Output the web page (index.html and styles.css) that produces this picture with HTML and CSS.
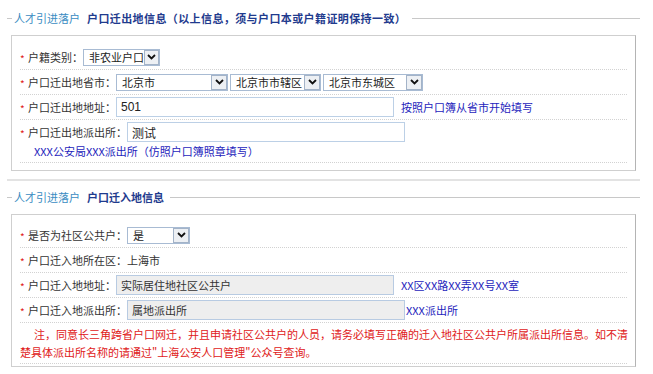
FILE: index.html
```html
<!DOCTYPE html>
<html lang="zh-CN">
<head>
  <meta charset="UTF-8" />
  <title>户口迁移信息</title>
  <link rel="stylesheet" href="styles.css">
</head>
<body>
  <div class="page">
    <div class="legend">
      <span class="cat">人才引进落户</span>
      <span class="title wide">户口迁出地信息（以上信息，须与户口本或户籍证明保持一致）</span>
    </div>
    <div class="box">
      <div class="row">
        <i class="req">*</i><span class="lbl">户籍类别：</span>
        <span class="sel w-type"><span class="val">非农业户口</span><span class="arr"><svg width="9" height="6" viewBox="0 0 9 6"><path d="M1 1 L4.5 4.5 L8 1" /></svg></span></span>
      </div>
      <div class="row">
        <i class="req">*</i><span class="lbl">户口迁出地省市：</span>
        <span class="sel w-prov"><span class="val">北京市</span><span class="arr"><svg width="9" height="6" viewBox="0 0 9 6"><path d="M1 1 L4.5 4.5 L8 1" /></svg></span></span>
        <span class="sel w-city"><span class="val">北京市市辖区</span><span class="arr"><svg width="9" height="6" viewBox="0 0 9 6"><path d="M1 1 L4.5 4.5 L8 1" /></svg></span></span>
        <span class="sel w-dist"><span class="val">北京市东城区</span><span class="arr"><svg width="9" height="6" viewBox="0 0 9 6"><path d="M1 1 L4.5 4.5 L8 1" /></svg></span></span>
      </div>
      <div class="row">
        <i class="req">*</i><span class="lbl">户口迁出地地址：</span>
        <input class="txt" type="text" value="501">
        <span class="hint gap">按照户口簿从省市开始填写</span>
      </div>
      <div class="row multi">
        <div class="line">
          <i class="req">*</i><span class="lbl">户口迁出地派出所：</span>
          <input class="txt" type="text" value="测试">
        </div>
        <div class="hint sub">XXX公安局XXX派出所（仿照户口簿照章填写）</div>
      </div>
    </div>

    <div class="divider"></div>

    <div class="legend second">
      <span class="cat">人才引进落户</span>
      <span class="title">户口迁入地信息</span>
    </div>
    <div class="box last">
      <div class="row">
        <i class="req">*</i><span class="lbl">是否为社区公共户：</span>
        <span class="sel w-yes"><span class="val">是</span><span class="arr"><svg width="9" height="6" viewBox="0 0 9 6"><path d="M1 1 L4.5 4.5 L8 1" /></svg></span></span>
      </div>
      <div class="row">
        <i class="req">*</i><span class="lbl">户口迁入地所在区：上海市</span>
      </div>
      <div class="row">
        <i class="req">*</i><span class="lbl">户口迁入地地址：</span>
        <input class="txt gray" type="text" value="实际居住地社区公共户" readonly>
        <span class="hint gap">XX区XX路XX弄XX号XX室</span>
      </div>
      <div class="row">
        <i class="req">*</i><span class="lbl">户口迁入地派出所：</span>
        <input class="txt gray" type="text" value="属地派出所" readonly>
        <span class="hint">XXX派出所</span>
      </div>
      <div class="row note">
        <p class="first">注，同意长三角跨省户口网迁，并且申请社区公共户的人员，请务必填写正确的迁入地社区公共户所属派出所信息。如不清</p>
        <p>楚具体派出所名称的请通过"上海公安人口管理"公众号查询。</p>
      </div>
    </div>
  </div>
</body>
</html>
```

FILE: styles.css
```css
body {
  margin: 0;
  background: #fff;
  font-family: "Noto Sans CJK SC", "Liberation Sans", sans-serif;
  font-size: 11px;
  color: #333;
}
.page {
  padding: 0 13px 0 7px;
}
.legend {
  display: flex;
  align-items: center;
  height: 16px;
  margin-top: 10px;
  white-space: nowrap;
}
.legend.second {
  margin-top: 8px;
}
.legend::before {
  content: "";
  width: 5px;
  border-top: 1px solid #c8c8c8;
  margin-right: 2px;
}
.legend::after {
  content: "";
  flex: 1;
  border-top: 1px solid #c8c8c8;
  margin-left: 6px;
}
.legend .cat {
  color: #3a8cc2;
}
.legend .title {
  margin-left: 7px;
  font-weight: bold;
  color: #1f3b8e;
}
.legend .title.wide {
  letter-spacing: 0.4px;
}
.box {
  margin: 9px 4px 0 4px;
  padding: 9px 8px 7px 8px;
  border: 1px solid #cfcfcf;
  border-right-color: #b4b4b4;
}
.box.last {
  padding-top: 8px;
  padding-bottom: 2px;
}
.divider {
  height: 2px;
  margin-top: 8px;
  background: #e3e3e3;
}
.row {
  display: flex;
  align-items: center;
  min-height: 20px;
  padding: 2px 0;
  border-bottom: 1px dotted #d2d2d2;
  white-space: nowrap;
}
.row.multi,
.row.note {
  display: block;
}
.row .line {
  display: flex;
  align-items: center;
  height: 20px;
}
.req {
  width: 8px;
  font-style: normal;
  font-size: 10px;
  color: #e02020;
  padding-top: 3px;
}
.lbl {
  line-height: 20px;
}
.sel {
  display: inline-flex;
  align-items: stretch;
  height: 17px;
  box-sizing: border-box;
  border: 1px solid #a8bbd3;
  background: #fff;
  margin-right: 2px;
}
.sel .val {
  flex: 1;
  padding-left: 5px;
  line-height: 15px;
  color: #222;
  font-size: 11px;
}
.sel .arr {
  display: flex;
  align-items: center;
  justify-content: center;
  width: 14px;
  border: 1px solid #a3b3c8;
  background: #edf0f4;
}
.sel .arr path {
  fill: none;
  stroke: #111;
  stroke-width: 1.8;
}
.w-type { width: 77px; }
.w-prov { width: 112px; }
.w-city { width: 91px; }
.w-dist { width: 100px; }
.w-yes { width: 63px; }
.txt {
  width: 278px;
  height: 20px;
  box-sizing: border-box;
  margin: 0;
  padding: 0 4px;
  border: 1px solid #bcd0e6;
  font-family: "Liberation Sans", "Noto Sans CJK SC", sans-serif;
  font-size: 12px;
  color: #222;
  outline: none;
}
.txt.gray {
  background: #eeeeee;
  border-color: #b8cbe2;
  font-family: "Noto Sans CJK SC", sans-serif;
  font-size: 11px;
  color: #333;
}
.hint {
  color: #1e24bc;
  line-height: 20px;
  margin-left: 1px;
}
.hint.gap {
  margin-left: 7px;
}
.hint.sub {
  padding-left: 14px;
  margin-left: 0;
  line-height: 18px;
}
.note p {
  margin: 0;
  line-height: 18px;
  color: #e02020;
}
.note p.first {
  padding-left: 14px;
}
```
